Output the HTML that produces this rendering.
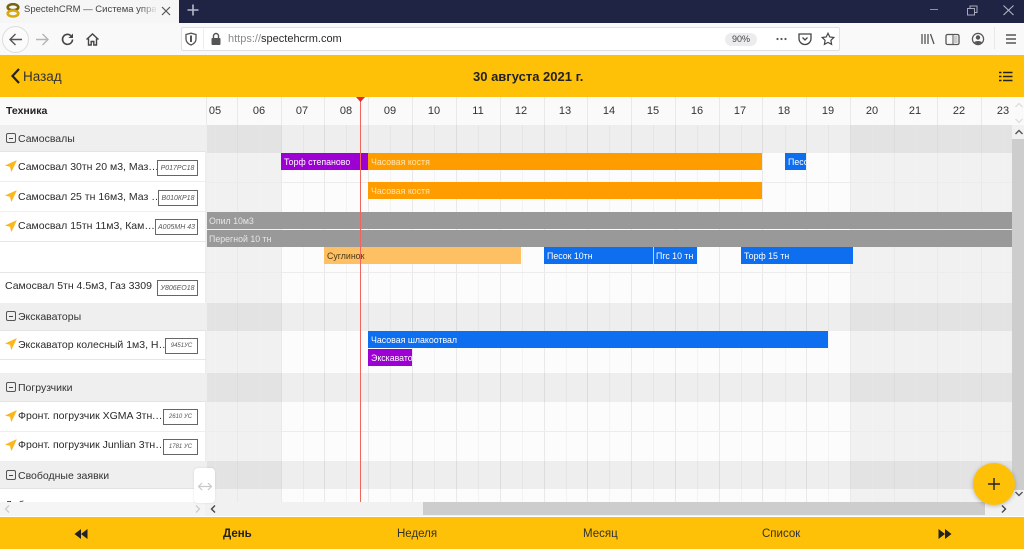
<!DOCTYPE html>
<html><head><meta charset="utf-8">
<style>
html,body{margin:0;padding:0;width:1024px;height:549px;overflow:hidden;background:#fff}
body{font-family:"Liberation Sans","Noto Sans CJK SC",sans-serif;position:relative;color:#222}
#w{left:0;top:0;width:1024px;height:549px;overflow:hidden;filter:blur(.35px)}
div,svg{position:absolute;box-sizing:border-box}
.t{white-space:nowrap}
.g{left:0;width:206px;background:#efefef;border-bottom:1px solid #e4e4e4}
.gb{left:207px;width:805px;background:rgba(0,0,0,.055)}
.gl{font-size:10.5px;left:18px;white-space:nowrap;color:#333}
.box{left:6px;width:10px;height:10px;border:1px solid #555;border-radius:2px}
.box:after{content:"";position:absolute;left:2px;top:3.5px;width:4px;height:1px;background:#444}
.r{font-size:10.5px;left:18px;white-space:nowrap;color:#2a2a2a}
.pl{border:1px solid #666;background:#fff;height:16px;font-size:7px;font-style:italic;text-align:center;line-height:15px;color:#555;white-space:nowrap}
.hl{left:0;width:206px;height:1px;background:#e6e6e6}
.b{height:17px;color:#fff;font-size:8.8px;line-height:18px;padding-left:3px;white-space:nowrap;overflow:hidden}
.d{top:105px;font-size:11px;width:30px;text-align:center;color:#333}
.ln{top:97px;width:1px;height:405px;background:#e9e9e9}
.ln2{top:125px;width:1px;height:377px;background:#f3f3f3}
.hln{left:207px;width:805px;height:1px;background:#ececec}
.nv{top:528px;font-size:11.5px;color:#333;white-space:nowrap}
</style></head><body><div id="w">

<!-- browser chrome -->
<div style="left:0;top:0;width:1024px;height:23px;background:#1f2344"></div>
<div style="left:0;top:0;width:179px;height:23px;background:#f6f6f7"></div>
<svg style="left:6px;top:3px" width="14" height="15" viewBox="0 0 14 15"><ellipse cx="7" cy="4.2" rx="5.3" ry="3" fill="none" stroke="#7a6310" stroke-width="2.6"/><ellipse cx="7" cy="10.5" rx="5.3" ry="3" fill="none" stroke="#d8a90c" stroke-width="2.6"/></svg>
<div class="t" style="left:24px;top:4px;font-size:9.5px;color:#444;width:132px;overflow:hidden">SpectehCRM — Система управления</div>
<div style="left:140px;top:2px;width:18px;height:18px;background:linear-gradient(90deg,rgba(246,246,247,0),#f6f6f7)"></div>
<svg style="left:160px;top:5px" width="12" height="12" viewBox="0 0 12 12"><path d="M2 2L10 10M10 2L2 10" stroke="#555" stroke-width="1.2"/></svg>
<svg style="left:186px;top:3px" width="14" height="14" viewBox="0 0 14 14"><path d="M7 1.5V12.5M1.5 7H12.5" stroke="#b9bbc8" stroke-width="1.6"/></svg>
<svg style="left:928px;top:3px" width="92" height="16" viewBox="0 0 92 16"><path d="M2 6.5H10" stroke="#8d90a6" stroke-width="1"/><path d="M39.5 5.5H46.5V12H39.5ZM42 5.5V3H49V9.5H46.5" fill="none" stroke="#a7a9bb" stroke-width="1"/><path d="M75.5 2.5L85.5 12M85.5 2.5L75.5 12" stroke="#b4b6c5" stroke-width="1.1"/></svg>

<div style="left:0;top:23px;width:1024px;height:32px;background:#f9f9fa"></div>
<div style="left:2px;top:26px;width:27px;height:27px;border-radius:50%;background:#fbfbfb;border:1px solid #ddd"></div>
<svg style="left:8px;top:32px" width="16" height="15" viewBox="0 0 16 15"><path d="M14 7.5H2.5M7.5 2L2 7.5L7.5 13" fill="none" stroke="#555" stroke-width="1.4"/></svg>
<svg style="left:34px;top:32px" width="16" height="15" viewBox="0 0 16 15"><path d="M2 7.5H13.5M8.5 2L14 7.5L8.5 13" fill="none" stroke="#b5b5b7" stroke-width="1.4"/></svg>
<svg style="left:60px;top:32px" width="15" height="15" viewBox="0 0 15 15"><path d="M12.5 7.5A5 5 0 1 1 10.8 3.6" fill="none" stroke="#444" stroke-width="1.6"/><path d="M13 1.5V6H8.5Z" fill="#444"/></svg>
<svg style="left:85px;top:32px" width="15" height="15" viewBox="0 0 15 15"><path d="M1.5 7.5L7.5 2L13.5 7.5M3.5 6.5V13H6.2V9.5H8.8V13H11.5V6.5" fill="none" stroke="#444" stroke-width="1.4"/></svg>

<div style="left:181px;top:27px;width:659px;height:24px;background:#fff;border:1px solid #e0e0e2;border-radius:2px"></div>
<svg style="left:184px;top:32px" width="14" height="14" viewBox="0 0 14 14"><path d="M2 2.5L7 1.2L12 2.5V7C12 10 9.5 12 7 13C4.5 12 2 10 2 7Z" fill="none" stroke="#555" stroke-width="1.3"/><path d="M7 3.5V10" stroke="#555" stroke-width="2"/></svg>
<div style="left:203px;top:29px;width:1px;height:20px;background:#ececec"></div>
<svg style="left:210px;top:32px" width="12" height="14" viewBox="0 0 12 14"><path d="M3.5 6V4A2.5 2.5 0 0 1 8.5 4V6" fill="none" stroke="#555" stroke-width="1.4"/><rect x="1.5" y="6" width="9" height="7" rx="1" fill="#555"/></svg>
<div class="t" style="left:228px;top:33px;font-size:11px;color:#8a8a8a">https://<span style="color:#2a2a2a">spectehcrm.com</span></div>
<div style="left:725px;top:33px;width:32px;height:13px;border-radius:7px;background:#ececee;font-size:9px;color:#444;text-align:center;line-height:13px">90%</div>
<svg style="left:775px;top:35px" width="14" height="8" viewBox="0 0 14 8"><circle cx="2.5" cy="4" r="1.1" fill="#555"/><circle cx="6.5" cy="4" r="1.1" fill="#555"/><circle cx="10.5" cy="4" r="1.1" fill="#555"/></svg>
<svg style="left:798px;top:32px" width="14" height="14" viewBox="0 0 14 14"><path d="M1 2H13V6.5A6 6 0 0 1 1 6.5Z" fill="none" stroke="#444" stroke-width="1.3"/><path d="M4.5 5.5L7 8L9.5 5.5" fill="none" stroke="#444" stroke-width="1.3"/></svg>
<svg style="left:821px;top:32px" width="14" height="14" viewBox="0 0 14 14"><path d="M7 1.3L8.8 5L12.8 5.5L9.9 8.3L10.6 12.4L7 10.4L3.4 12.4L4.1 8.3L1.2 5.5L5.2 5Z" fill="none" stroke="#444" stroke-width="1.2"/></svg>
<svg style="left:920px;top:32px" width="15" height="14" viewBox="0 0 15 14"><path d="M2 2V12M5 2V12M8 2V12M10.5 2L14 12" stroke="#555" stroke-width="1.3" fill="none"/></svg>
<svg style="left:945px;top:33px" width="15" height="13" viewBox="0 0 15 13"><rect x="1" y="1.5" width="13" height="10" rx="1.5" fill="none" stroke="#555" stroke-width="1.3"/><path d="M8 2V11" stroke="#555"/><rect x="9" y="3" width="3.5" height="7" fill="#ccc"/></svg>
<svg style="left:971px;top:32px" width="14" height="14" viewBox="0 0 14 14"><circle cx="7" cy="7" r="5.6" fill="none" stroke="#555" stroke-width="1.2"/><circle cx="7" cy="5.5" r="2.2" fill="#555"/><path d="M3 10.5C4 8.5 10 8.5 11 10.5L7 12.5Z" fill="#555"/></svg>
<div style="left:994px;top:27px;width:1px;height:22px;background:#e8e8e8"></div>
<svg style="left:1004px;top:32px" width="14" height="14" viewBox="0 0 14 14"><path d="M2 3H12M2 7H12M2 11H12" stroke="#555" stroke-width="1.4"/></svg>

<!-- yellow app bar -->
<div style="left:0;top:55px;width:1024px;height:42px;background:#ffc107"></div>
<svg style="left:10px;top:67px" width="11" height="18" viewBox="0 0 11 18"><path d="M9 2L2.5 9L9 16" fill="none" stroke="#222" stroke-width="2.2"/></svg>
<div class="t" style="left:23px;top:69px;font-size:13.5px;color:#333">Назад</div>
<div class="t" style="left:473px;top:69px;font-size:13px;font-weight:bold;color:#222">30 августа 2021 г.</div>
<svg style="left:999px;top:71px" width="14" height="11" viewBox="0 0 14 11"><path d="M4 1.5H13.5M4 5.5H13.5M4 9.5H13.5" stroke="#222" stroke-width="1.5"/><path d="M0 1.5H2.5M0 5.5H2.5M0 9.5H2.5" stroke="#222" stroke-width="1.5"/></svg>

<!-- table header -->
<div style="left:0;top:97px;width:1024px;height:28px;background:#fafafa"></div>
<div class="t" style="left:6px;top:105px;font-size:10.5px;font-weight:bold;color:#222">Техника</div>

<!-- shaded weekends -->
<div style="left:207px;top:125px;width:74px;height:377px;background:#f1f1f1"></div>
<div style="left:850px;top:125px;width:162px;height:377px;background:#f1f1f1"></div>
<div style="left:281px;top:125px;width:569px;height:377px;background:#fcfcfc"></div>

<!-- grid half lines -->
<div class="ln2" style="left:215px"></div><div class="ln2" style="left:259px"></div><div class="ln2" style="left:303px"></div><div class="ln2" style="left:346px"></div><div class="ln2" style="left:390px"></div><div class="ln2" style="left:434px"></div><div class="ln2" style="left:478px"></div><div class="ln2" style="left:522px"></div><div class="ln2" style="left:566px"></div><div class="ln2" style="left:609px"></div><div class="ln2" style="left:653px"></div><div class="ln2" style="left:697px"></div><div class="ln2" style="left:741px"></div><div class="ln2" style="left:785px"></div><div class="ln2" style="left:828px"></div><div class="ln2" style="left:872px"></div><div class="ln2" style="left:916px"></div><div class="ln2" style="left:960px"></div><div class="ln2" style="left:1003px"></div>
<!-- grid lines -->
<div class="ln" style="left:206px"></div><div class="ln" style="left:237px"></div><div class="ln" style="left:281px"></div><div class="ln" style="left:324px"></div><div class="ln" style="left:368px"></div><div class="ln" style="left:412px"></div><div class="ln" style="left:456px"></div><div class="ln" style="left:500px"></div><div class="ln" style="left:544px"></div><div class="ln" style="left:587px"></div><div class="ln" style="left:631px"></div><div class="ln" style="left:675px"></div><div class="ln" style="left:719px"></div><div class="ln" style="left:762px"></div><div class="ln" style="left:806px"></div><div class="ln" style="left:850px"></div><div class="ln" style="left:894px"></div><div class="ln" style="left:937px"></div><div class="ln" style="left:981px"></div>

<div class="d" style="left:200px">05</div><div class="d" style="left:244px">06</div><div class="d" style="left:287px">07</div><div class="d" style="left:331px">08</div><div class="d" style="left:375px">09</div><div class="d" style="left:419px">10</div><div class="d" style="left:463px">11</div><div class="d" style="left:506px">12</div><div class="d" style="left:550px">13</div><div class="d" style="left:594px">14</div><div class="d" style="left:638px">15</div><div class="d" style="left:682px">16</div><div class="d" style="left:725px">17</div><div class="d" style="left:769px">18</div><div class="d" style="left:813px">19</div><div class="d" style="left:857px">20</div><div class="d" style="left:900px">21</div><div class="d" style="left:944px">22</div><div class="d" style="left:988px">23</div>

<!-- left pane bg -->
<div style="left:0;top:125px;width:205px;height:377px;background:#fff"></div>
<div style="left:205px;top:125px;width:2px;height:377px;background:#eee"></div>

<!-- group rows -->
<div class="g" style="top:125px;height:27px"></div><div class="gb" style="top:125px;height:28px"></div>
<div class="g" style="top:303px;height:28px"></div><div class="gb" style="top:303px;height:28px"></div>
<div class="g" style="top:373px;height:29px"></div><div class="gb" style="top:373px;height:29px"></div>
<div class="g" style="top:461px;height:28px"></div><div class="gb" style="top:461px;height:28px"></div>

<div class="box" style="top:133px"></div><div class="gl" style="top:133px">Самосвалы</div>
<div class="box" style="top:311px"></div><div class="gl" style="top:311px">Экскаваторы</div>
<div class="box" style="top:382px"></div><div class="gl" style="top:382px">Погрузчики</div>
<div class="box" style="top:470px"></div><div class="gl" style="top:470px">Свободные заявки</div>

<!-- row separators -->
<div class="hl" style="top:181px;background:#eee"></div><div class="hl" style="top:211px;background:#eee"></div><div class="hl" style="top:241px"></div><div class="hl" style="top:272px"></div>
<div class="hl" style="top:359px"></div><div class="hl" style="top:431px;background:#eee"></div>
<div class="hln" style="top:182px"></div><div class="hln" style="top:272px"></div><div class="hln" style="top:431px"></div>

<!-- row labels -->
<svg style="left:5px;top:160px" width="12" height="12" viewBox="0 0 12 12"><path d="M11.5 0.5L0.5 5.5L5.2 6.6L6.4 11.5Z" fill="#fbb81c" stroke="#fbb81c" stroke-width=".5"/></svg>
<div class="r" style="top:161px">Самосвал 30тн 20 м3, Маз…</div>
<div class="pl" style="left:157px;top:160px;width:41px">Р017РС18</div>
<svg style="left:5px;top:190px" width="12" height="12" viewBox="0 0 12 12"><path d="M11.5 0.5L0.5 5.5L5.2 6.6L6.4 11.5Z" fill="#fbb81c" stroke="#fbb81c" stroke-width=".5"/></svg>
<div class="r" style="top:191px">Самосвал 25 тн 16м3, Маз …</div>
<div class="pl" style="left:158px;top:190px;width:40px">В010КР18</div>
<svg style="left:5px;top:220px" width="12" height="12" viewBox="0 0 12 12"><path d="M11.5 0.5L0.5 5.5L5.2 6.6L6.4 11.5Z" fill="#fbb81c" stroke="#fbb81c" stroke-width=".5"/></svg>
<div class="r" style="top:220px">Самосвал 15тн 11м3, Кам…</div>
<div class="pl" style="left:155px;top:219px;width:43px">А005МН 43</div>
<div class="r" style="top:280px;left:5px">Самосвал 5тн 4.5м3, Газ 3309</div>
<div class="pl" style="left:157px;top:280px;width:41px">У806ЕО18</div>
<svg style="left:5px;top:338px" width="12" height="12" viewBox="0 0 12 12"><path d="M11.5 0.5L0.5 5.5L5.2 6.6L6.4 11.5Z" fill="#fbb81c" stroke="#fbb81c" stroke-width=".5"/></svg>
<div class="r" style="top:339px">Экскаватор колесный 1м3, Н…</div>
<div class="pl" style="left:165px;top:338px;width:33px;font-size:6px">9451УС</div>
<svg style="left:5px;top:410px" width="12" height="12" viewBox="0 0 12 12"><path d="M11.5 0.5L0.5 5.5L5.2 6.6L6.4 11.5Z" fill="#fbb81c" stroke="#fbb81c" stroke-width=".5"/></svg>
<div class="r" style="top:410px">Фронт. погрузчик XGMA 3тн.…</div>
<div class="pl" style="left:163px;top:409px;width:35px;font-size:6px">2610 УС</div>
<svg style="left:5px;top:439px" width="12" height="12" viewBox="0 0 12 12"><path d="M11.5 0.5L0.5 5.5L5.2 6.6L6.4 11.5Z" fill="#fbb81c" stroke="#fbb81c" stroke-width=".5"/></svg>
<div class="r" style="top:439px">Фронт. погрузчик Junlian 3тн…</div>
<div class="pl" style="left:163px;top:439px;width:35px;font-size:6px">1781 УС</div>
<div style="left:0;top:490px;width:190px;height:12px;overflow:hidden"><div class="r" style="top:9px;left:5px">Добавить</div></div>

<!-- bars -->
<div class="b" style="left:281px;top:153px;width:87px;background:#9c00d3">Торф степаново</div>
<div class="b" style="left:368px;top:153px;width:394px;background:#ff9c00;color:#ffe6b0">Часовая костя</div>
<div class="b" style="left:785px;top:153px;width:21px;background:#0d6ef0">Песок</div>
<div class="b" style="left:368px;top:182px;width:394px;background:#ff9c00;color:#ffe6b0">Часовая костя</div>
<div class="b" style="left:207px;top:212px;width:805px;background:#999;color:#e6e6e6;padding-left:2px">Опил 10м3</div>
<div class="b" style="left:207px;top:230px;width:805px;background:#999;color:#e6e6e6;padding-left:2px">Перегной 10 тн</div>
<div class="b" style="left:324px;top:247px;width:197px;background:#ffc064;color:#4a3a1a">Суглинок</div>
<div class="b" style="left:544px;top:247px;width:109px;background:#0d6ef0">Песок 10тн</div>
<div class="b" style="left:653px;top:247px;width:44px;background:#0d6ef0;border-left:1px solid #bcd5fa;padding-left:2px">Пгс 10 тн</div>
<div class="b" style="left:741px;top:247px;width:112px;background:#0d6ef0">Торф 15 тн</div>
<div class="b" style="left:368px;top:331px;width:460px;background:#0d6ef0">Часовая шлакоотвал</div>
<div class="b" style="left:368px;top:349px;width:44px;background:#9c00d3">Экскаватор</div>

<!-- now line -->
<div style="left:360px;top:97px;width:1px;height:405px;background:#f0665c"></div>
<svg style="left:356px;top:97px" width="9" height="5" viewBox="0 0 9 5"><path d="M0 0H9L4.5 5Z" fill="#e8262a"/></svg>
<div style="left:0;top:96px;width:1024px;height:1px;background:#ffc107"></div>

<!-- scrollbars -->
<div style="left:1012px;top:125px;width:12px;height:377px;background:#f1f1f1"></div>
<div style="left:1012px;top:139px;width:12px;height:351px;background:#cdcdcd"></div>
<svg style="left:1014px;top:129px" width="10" height="6" viewBox="0 0 10 6"><path d="M1.5 5L5 1.5L8.5 5" fill="none" stroke="#555" stroke-width="1.4"/></svg>
<svg style="left:1014px;top:491px" width="10" height="6" viewBox="0 0 10 6"><path d="M1.5 1L5 4.5L8.5 1" fill="none" stroke="#555" stroke-width="1.4"/></svg>
<svg style="left:1014px;top:101px" width="10" height="25" viewBox="0 0 10 25"><path d="M1.5 6L5 2.5L8.5 6M1.5 18L5 21.5L8.5 18" fill="none" stroke="#ddd" stroke-width="1.3"/></svg>

<div style="left:0;top:502px;width:205px;height:14px;background:#f5f5f5"></div>
<svg style="left:3px;top:504px" width="8" height="10" viewBox="0 0 8 10"><path d="M6 1.5L2.5 5L6 8.5" fill="none" stroke="#ccc" stroke-width="1.3"/></svg>
<svg style="left:194px;top:504px" width="8" height="10" viewBox="0 0 8 10"><path d="M2 1.5L5.5 5L2 8.5" fill="none" stroke="#ccc" stroke-width="1.3"/></svg>
<div style="left:205px;top:502px;width:819px;height:14px;background:#f1f1f1"></div>
<div style="left:423px;top:502px;width:562px;height:13px;background:#cdcdcd"></div>
<svg style="left:209px;top:504px" width="8" height="10" viewBox="0 0 8 10"><path d="M6 1.5L2.5 5L6 8.5" fill="none" stroke="#444" stroke-width="1.4"/></svg>
<svg style="left:1000px;top:504px" width="8" height="10" viewBox="0 0 8 10"><path d="M2 1.5L5.5 5L2 8.5" fill="none" stroke="#444" stroke-width="1.4"/></svg>

<!-- drag handle -->
<div style="left:194px;top:468px;width:21px;height:35px;background:#fff;border-radius:4px;box-shadow:0 0 2px rgba(0,0,0,.12)"></div>
<svg style="left:197px;top:481px" width="16" height="11" viewBox="0 0 16 11"><path d="M1.5 5.5H14.5M5 2L1.5 5.5L5 9M11 2L14.5 5.5L11 9" fill="none" stroke="#c9c9c9" stroke-width="1.2"/></svg>

<!-- bottom bar -->
<div style="left:0;top:516px;width:1024px;height:1px;background:#fff"></div>
<div style="left:0;top:517px;width:1024px;height:32px;background:#ffc107"></div>
<svg style="left:74px;top:529px" width="14" height="10" viewBox="0 0 14 10"><path d="M7 0V10L0.5 5ZM13.5 0V10L7 5Z" fill="#222"/></svg>
<div class="nv" style="left:223px;font-weight:bold;color:#222">День</div>
<div class="nv" style="left:397px">Неделя</div>
<div class="nv" style="left:583px">Месяц</div>
<div class="nv" style="left:762px">Список</div>
<svg style="left:938px;top:529px" width="14" height="10" viewBox="0 0 14 10"><path d="M0.5 0V10L7 5ZM7 0V10L13.5 5Z" fill="#222"/></svg>

<!-- FAB -->
<div style="left:973px;top:463px;width:42px;height:42px;border-radius:50%;background:#ffc107;box-shadow:0 1px 4px rgba(0,0,0,.25)"></div>
<svg style="left:987px;top:477px" width="14" height="14" viewBox="0 0 14 14"><path d="M7 1V13M1 7H13" stroke="#222" stroke-width="1.4"/></svg>
</div></body></html>
